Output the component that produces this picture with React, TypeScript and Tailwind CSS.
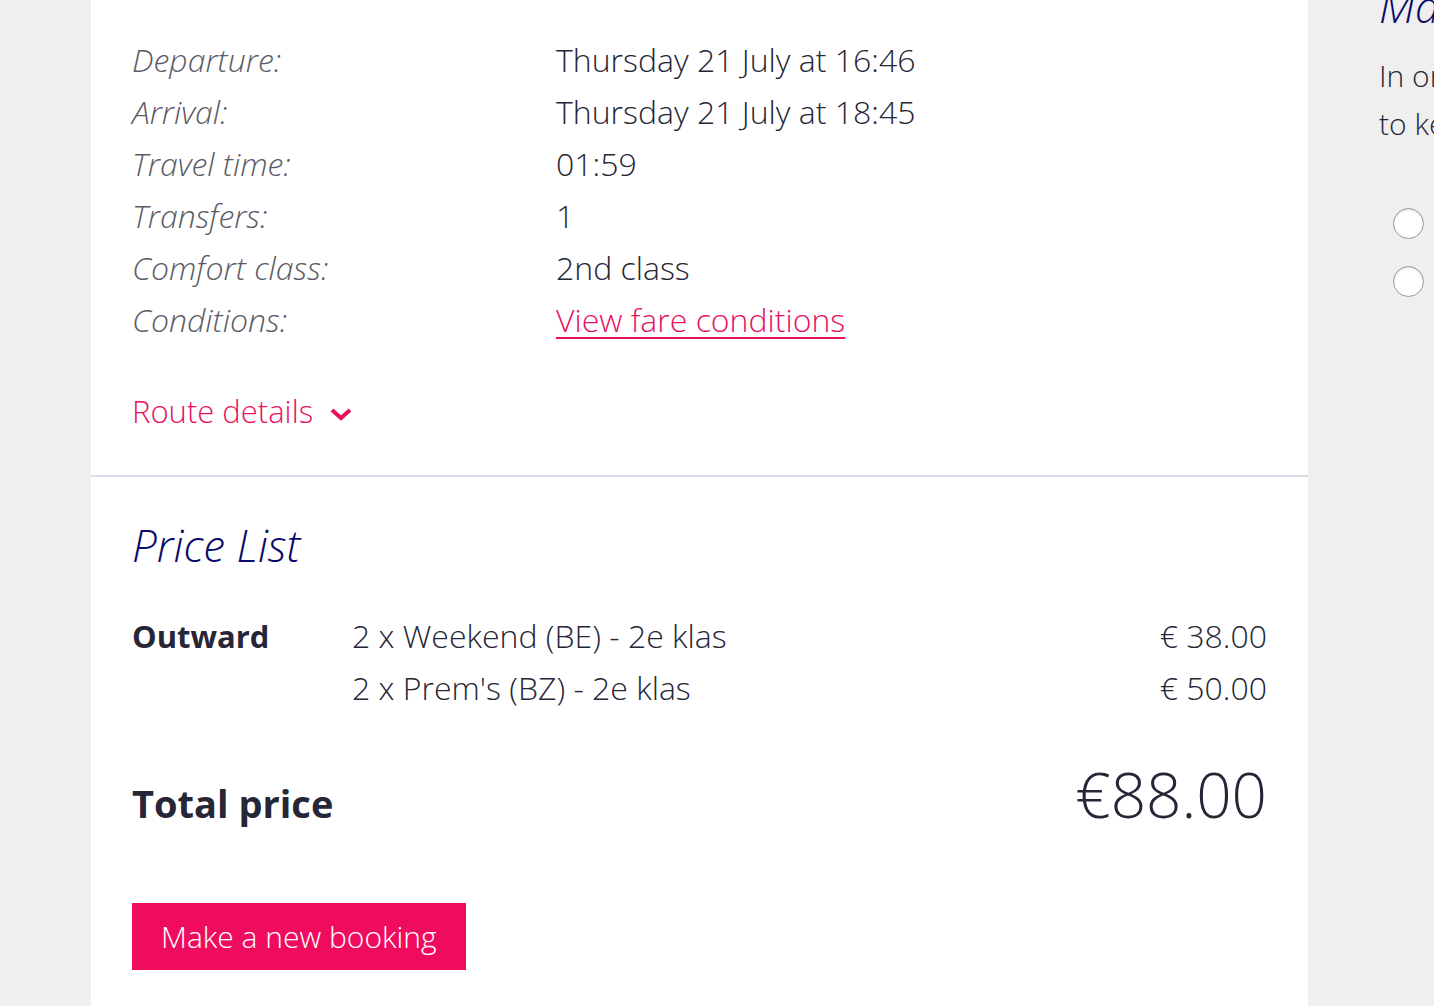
import React from "react";

const details = [
  { label: "Departure:", value: "Thursday 21 July at 16:46" },
  { label: "Arrival:", value: "Thursday 21 July at 18:45" },
  { label: "Travel time:", value: "01:59" },
  { label: "Transfers:", value: "1" },
  { label: "Comfort class:", value: "2nd class" },
];

const prices = [
  { name: "2 x Weekend (BE) - 2e klas", amount: "€ 38.00" },
  { name: "2 x Prem's (BZ) - 2e klas", amount: "€ 50.00" },
];

export default function App() {
  return (
    <div className="flex h-[1006px] w-[1434px] overflow-hidden bg-[#efefef] font-['Open_Sans',sans-serif] font-light text-[#262637]">
      <div className="w-[91px] shrink-0" />

      {/* booking card */}
      <div className="w-[1217px] shrink-0 bg-white">
        <div className="px-[41px] pt-[34px] pb-[38px]">
          <div className="text-[32px] leading-[52px]">
            {details.map((d) => (
              <div key={d.label} className="flex">
                <div className="w-[424px] italic text-[#5b5b66]">{d.label}</div>
                <div>{d.value}</div>
              </div>
            ))}
            <div className="flex">
              <div className="w-[424px] italic text-[#5b5b66]">Conditions:</div>
              <a href="#" className="text-[#e8115f] underline decoration-2 underline-offset-[5px]">
                View fare conditions
              </a>
            </div>
          </div>

          <button className="mt-[39px] flex items-center gap-[16px] text-[31px] leading-[52px] text-[#e8115f]">
            Route details
            <svg width="24" height="16" viewBox="0 0 24 16" className="mt-[6px]">
              <polyline points="3,4 12,12 21,4" fill="none" stroke="#e8115f" strokeWidth="4" />
            </svg>
          </button>
        </div>

        <div className="h-[2px] bg-[#dcdbe8]" />

        <div className="px-[41px] pt-[40px]">
          <h2 className="text-[44px] leading-[56px] italic text-[#0b0b6b]">Price List</h2>

          <div className="mt-[37px] flex text-[32px] leading-[52px]">
            <div className="w-[220px] text-[31px] font-bold">Outward</div>
            <div className="flex-1">
              {prices.map((p) => (
                <div key={p.name} className="flex justify-between">
                  <span>{p.name}</span>
                  <span>{p.amount}</span>
                </div>
              ))}
            </div>
          </div>

          <div className="mt-[34px] flex items-baseline justify-between">
            <span className="text-[38px] font-bold">Total price</span>
            <span className="text-[62px]">€88.00</span>
          </div>

          <button className="mt-[62px] bg-[#ef0c5f] px-[29px] py-[8px] text-[30px] leading-[51px] text-white">
            Make a new booking
          </button>
        </div>
      </div>

      {/* side column */}
      <div className="min-w-0 flex-1 whitespace-nowrap pl-[71px]">
        <h2 className="-mt-[22px] text-[44px] leading-[56px] italic text-[#0b0b6b]">Make sure</h2>
        <p className="mt-[18px] text-[30px] leading-[48px]">
          In order
          <br />
          to keep
        </p>
        <div className="mt-[60px] flex flex-col gap-[27px] pl-[14px]">
          {[0, 1].map((i) => (
            <span
              key={i}
              className="block h-[31px] w-[31px] rounded-full border border-[#9a9a9a] bg-white shadow-[inset_0_1px_2px_rgba(0,0,0,0.15)]"
            />
          ))}
        </div>
      </div>
    </div>
  );
}
